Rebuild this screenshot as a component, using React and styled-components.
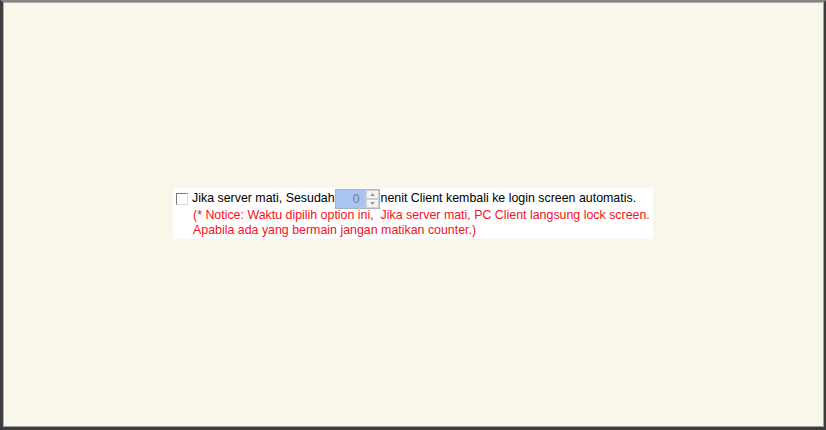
import React from 'react'
import styled, { createGlobalStyle } from 'styled-components'

const Global = createGlobalStyle`
  html, body { margin: 0; padding: 0; }
  body { font-family: 'Liberation Sans', Arial, sans-serif; }
`

const Frame = styled.div`
  box-sizing: border-box;
  width: 826px;
  height: 430px;
  background: #f9f7ea;
  border-top: 2px solid #858585;
  border-left: 3px solid #3c3c3c;
  border-right: 2px solid #3c3c3c;
  border-bottom: 3px solid #3c3c3c;
  box-shadow: inset 1px 1px 0 #b0b0b0, inset -1px -1px 0 #a0a0a0;
  display: flex;
  align-items: center;
  justify-content: center;
  padding-bottom: 3px;
`

const Panel = styled.div`
  background: #ffffff;
  width: 480px;
  height: 51px;
  box-sizing: border-box;
  padding: 1px 0 0 3px;
  margin-left: -1px;
  font-size: 12.4px;
  line-height: 15px;
`

const Row = styled.div`
  display: flex;
  align-items: center;
  height: 20px;
  color: #000;
`

const Check = styled.span`
  box-sizing: border-box;
  width: 12px;
  height: 12px;
  border: 1px solid #7a7a7a;
  border-right-color: #dcdcdc;
  border-bottom-color: #dcdcdc;
  background: #fff;
  margin-right: 4px;
`

const Spinner = styled.span`
  display: inline-flex;
  box-sizing: border-box;
  height: 20px;
  width: 45px;
  border: 1px solid #a6b4c8;
  margin: 0 1px 0 0;
`

const Field = styled.span`
  flex: 1;
  background: #a9c4ee;
  color: #6f7f9a;
  text-align: right;
  padding-right: 5px;
  line-height: 18px;
`

const Arrows = styled.span`
  width: 13px;
  display: flex;
  flex-direction: column;
  background: #f4f4f4;
  border-left: 1px solid #c8c8c8;
`

const Arrow = styled.span`
  flex: 1;
  display: flex;
  align-items: center;
  justify-content: center;
  border: 1px solid #d0d0d0;
  svg { display: block; }
`

const Notice = styled.div`
  color: #f0141e;
  padding-left: 17px;
  margin-top: -1px;
`

export default function App() {
  return (
    <>
      <Global />
      <Frame>
        <Panel>
          <Row>
            <Check />
            Jika server mati, Sesudah
            <Spinner>
              <Field>0</Field>
              <Arrows>
                <Arrow>
                  <svg width="5" height="3" viewBox="0 0 5 3"><path d="M0 3 L2.5 0 L5 3 Z" fill="#9a9a9a" /></svg>
                </Arrow>
                <Arrow>
                  <svg width="5" height="3" viewBox="0 0 5 3"><path d="M0 0 L2.5 3 L5 0 Z" fill="#9a9a9a" /></svg>
                </Arrow>
              </Arrows>
            </Spinner>
            nenit Client kembali ke login screen automatis.
          </Row>
          <Notice>
            (* Notice: Waktu dipilih option ini,&nbsp; Jika server mati, PC Client langsung lock screen.
            <br />
            Apabila ada yang bermain jangan matikan counter.)
          </Notice>
        </Panel>
      </Frame>
    </>
  )
}
